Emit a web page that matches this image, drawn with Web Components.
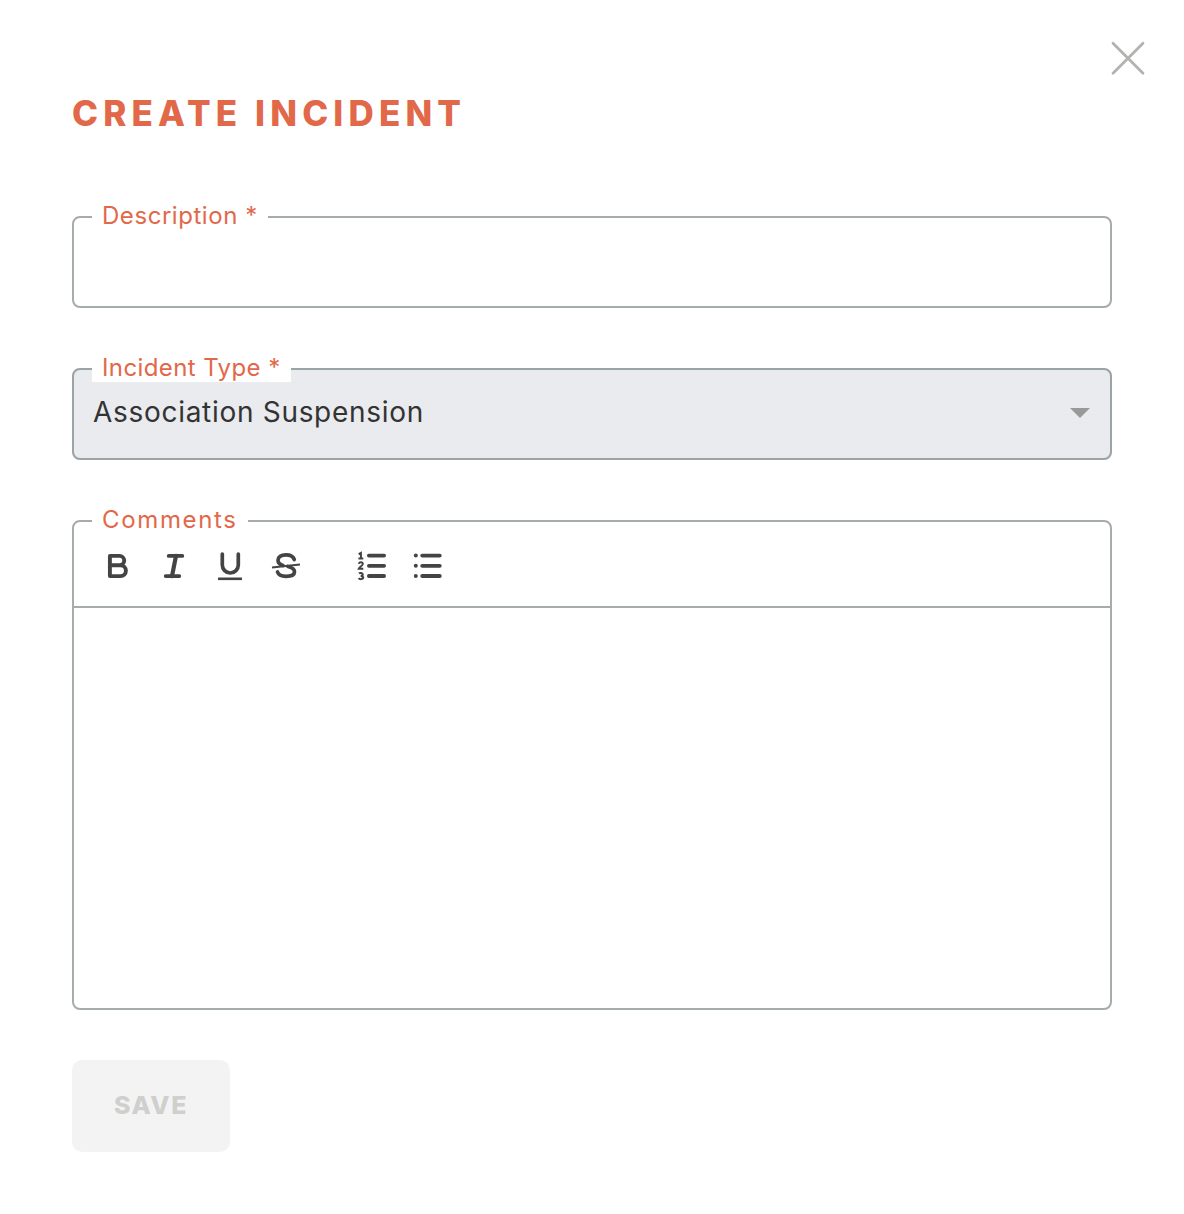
<!DOCTYPE html>
<html lang="en">
<head>
<meta charset="utf-8">
<title>Create Incident</title>
<style>
  html, body { margin: 0; background: #fff; }
  body { font-family: Inter, "Noto Sans", sans-serif; }
  form-field[label="Comments"] { --label-spacing: 1.65px; }
  form-field[label="Incident Type *"] { --label-spacing: 0.4px; }
</style>
</head>
<body>
<incident-dialog heading="Create Incident">
  <form-field label="Description *"><text-box></text-box></form-field>
  <form-field label="Incident Type *" tone="filled"><select-box value="Association Suspension"></select-box></form-field>
  <form-field label="Comments"><rich-editor></rich-editor></form-field>
  <save-button slot="actions">Save</save-button>
</incident-dialog>

<script>
// Dialog shell: title, close cross, form fields and the action row
class IncidentDialog extends HTMLElement {
    constructor() {
        super();
        this.attachShadow({ mode: 'open' });
        this.shadowRoot.innerHTML = `
        <style>
            :host { display: block; position: relative; box-sizing: border-box; width: 1184px; height: 1214px; padding: 0 72px; background: #fff; }
            h1 { margin: 0; padding-top: 92px; height: 203px; box-sizing: border-box; font: 800 35px/42px Inter, sans-serif; letter-spacing: 5.15px; color: #e2684a; text-transform: uppercase; }
            .fields { display: flex; flex-direction: column; gap: 47px; }
            .actions { margin-top: 50px; }
            button { position: absolute; top: 41px; left: 1110px; width: 36px; height: 36px; padding: 0; border: 0; background: none; }
            svg { display: block; }
        </style>
        <button aria-label="Close">
            <svg width="36" height="36" viewBox="0 0 36 36" fill="none" stroke="#b1b3af" stroke-width="2.8" stroke-linecap="round"><path d="M3 2.3 L33 32.3 M33 2.3 L3 32.3"/></svg>
        </button>
        <h1></h1>
        <div class="fields"><slot></slot></div>
        <div class="actions"><slot name="actions"></slot></div>
        `;
    }

    connectedCallback() {
        this.shadowRoot.querySelector('h1').textContent = this.getAttribute('heading');
    }
}

// Outlined field with its label sitting in the border
class FormField extends HTMLElement {
    constructor() {
        super();
        this.attachShadow({ mode: 'open' });
        this.shadowRoot.innerHTML = `
        <style>
            :host { display: block; }
            fieldset { margin: 0; padding: 0; min-width: 0; border: 2px solid #a6abab; border-radius: 8px; }
            :host([tone="filled"]) fieldset { border-color: #9aa3a5; background: #e9ebee; }
            legend { margin-left: 18px; padding: 0 10px; height: 28px; box-sizing: border-box; background: linear-gradient(#fff 27px, transparent 27px); font: 400 24px/26px Inter, sans-serif; letter-spacing: var(--label-spacing, 0.55px); color: #e2684a; }
        </style>
        <fieldset><legend></legend><slot></slot></fieldset>
        `;
    }

    connectedCallback() {
        this.shadowRoot.querySelector('legend').textContent = this.getAttribute('label');
    }
}

class TextBox extends HTMLElement {
    constructor() {
        super();
        this.attachShadow({ mode: 'open' });
        this.shadowRoot.innerHTML = `
        <style>
            :host { display: block; }
            input { display: block; width: 100%; height: 75px; box-sizing: border-box; padding: 0 20px; border: 0; outline: 0; background: transparent; font: 400 28px Inter, sans-serif; color: #333; }
        </style>
        <input type="text">
        `;
    }
}

class SelectBox extends HTMLElement {
    constructor() {
        super();
        this.attachShadow({ mode: 'open' });
        this.shadowRoot.innerHTML = `
        <style>
            :host { display: flex; align-items: flex-start; justify-content: space-between; height: 75px; box-sizing: border-box; padding: 10px 20px 0 19px; font: 400 28px/38px Inter, sans-serif; letter-spacing: 0.7px; color: #333; }
            svg { margin-top: 15px; }
        </style>
        <span></span>
        <svg width="20" height="10" viewBox="0 0 20 10"><path d="M0 0 H20 L10 10 Z" fill="#999"/></svg>
        `;
    }

    connectedCallback() {
        this.shadowRoot.querySelector('span').textContent = this.getAttribute('value');
    }
}

// Toolbar icons, all drawn in a 28x28 box
const ICONS = {
    bold: '<path d="M5.9 3.9 V24.1 M5.9 3.9 H15.5 A4.7 4.7 0 0 1 15.5 13.3 H5.9 M15.5 13.3 H16.5 A5.4 5.4 0 0 1 16.5 24.1 H5.9" stroke-width="3.9"/>',
    italic: '<path d="M8.7 3.9 H22.3 M5.7 24.1 H19.3" stroke-width="3.8"/><path d="M16 3.9 L12 24.1" stroke-width="4.2"/>',
    underline: '<path d="M6.3 2 V13 A8 8 0 0 0 22.3 13 V2" stroke-width="3.7"/><path d="M2 26.8 H26" stroke-width="2.6" stroke-linecap="butt"/>',
    strike: '<path d="M22.3 7.5 C21 4 17.5 2.9 14 2.9 C9 2.9 6 5 6 8.3 C6 11 8.5 12.8 11 13.5 M16 14.5 C20 15.5 22.5 17 22.5 19.7 C22.5 23 19 24.3 14 24.3 C9.5 24.3 6.5 23 5.5 20" stroke-width="3.7"/><path d="M0 15.5 L28 12.5" stroke-width="2" stroke-linecap="butt"/>',
    ordered: '<path d="M10.9 3.6 H26.1 M10.9 13.8 H26.1 M10.9 24 H26.1" stroke-width="3.8"/><path d="M0.6 2.2 L2.9 1 V6.6 M0.4 6.6 H5.3 M0.7 11.8 C1.4 9.6 5 9.8 4.8 12 C4.6 14 1.4 14.8 0.7 16.8 H5.3 M0.9 21.4 C2 20.6 4.8 20.8 4.8 22.6 C4.8 23.6 3.8 24 2.6 24 C4 24 5.2 24.6 5.2 25.6 C5.2 27.4 1.6 27.6 0.6 26.2" stroke-width="2" stroke-linecap="butt" stroke-linejoin="miter"/>',
    bullet: '<path d="M8.2 3.6 H25.8 M8.2 13.8 H25.8 M8.2 24 H25.8" stroke-width="3.8"/><circle cx="1.8" cy="3.6" r="2" fill="#444" stroke="none"/><circle cx="1.8" cy="13.8" r="2" fill="#444" stroke="none"/><circle cx="1.8" cy="24" r="2" fill="#444" stroke="none"/>'
};

class ToolButton extends HTMLElement {
    constructor() {
        super();
        this.attachShadow({ mode: 'open' });
        this.shadowRoot.innerHTML = `
        <style>
            :host { display: flex; align-items: center; justify-content: center; width: 56px; height: 28px; }
            svg { display: block; overflow: visible; }
        </style>
        <svg width="28" height="28" viewBox="0 0 28 28" fill="none" stroke="#444" stroke-linecap="round" stroke-linejoin="round"></svg>
        `;
    }

    connectedCallback() {
        this.shadowRoot.querySelector('svg').innerHTML = ICONS[this.getAttribute('icon')];
    }
}

class RichEditor extends HTMLElement {
    constructor() {
        super();
        this.attachShadow({ mode: 'open' });
        this.shadowRoot.innerHTML = `
        <style>
            :host { display: block; }
            .toolbar { display: flex; height: 54px; padding: 17px 16px 0; border-bottom: 2px solid #a6abab; }
            .gap { width: 30px; }
            .body { height: 400px; box-sizing: border-box; padding: 16px 20px; outline: 0; font: 400 28px Inter, sans-serif; color: #333; }
        </style>
        <div class="toolbar">
            <tool-button icon="bold"></tool-button>
            <tool-button icon="italic"></tool-button>
            <tool-button icon="underline"></tool-button>
            <tool-button icon="strike"></tool-button>
            <span class="gap"></span>
            <tool-button icon="ordered"></tool-button>
            <tool-button icon="bullet"></tool-button>
        </div>
        <div class="body" contenteditable="true"></div>
        `;
    }
}

class SaveButton extends HTMLElement {
    constructor() {
        super();
        this.attachShadow({ mode: 'open' });
        this.shadowRoot.innerHTML = `
        <style>
            :host { display: flex; align-items: center; justify-content: center; box-sizing: border-box; width: 158px; height: 92px; padding-bottom: 2px; border-radius: 10px; background: #f3f3f3; font: 800 25px/30px Inter, sans-serif; letter-spacing: 1.6px; color: #cfcfcd; text-transform: uppercase; }
        </style>
        <slot></slot>
        `;
    }
}

customElements.define('incident-dialog', IncidentDialog);
customElements.define('form-field', FormField);
customElements.define('text-box', TextBox);
customElements.define('select-box', SelectBox);
customElements.define('tool-button', ToolButton);
customElements.define('rich-editor', RichEditor);
customElements.define('save-button', SaveButton);
</script>
</body>
</html>
